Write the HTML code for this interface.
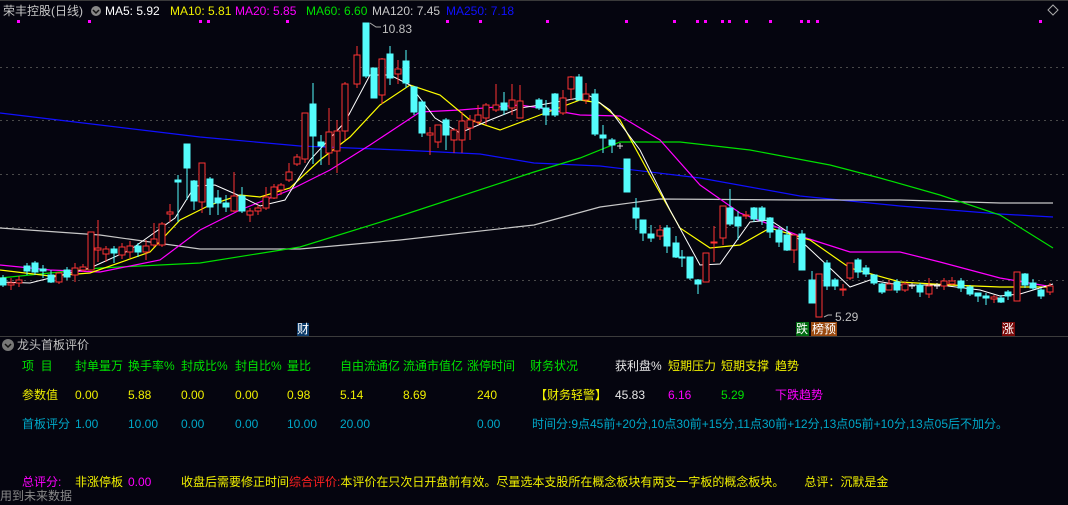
<!DOCTYPE html>
<html><head><meta charset="utf-8"><style>
html,body{margin:0;padding:0;background:#05050f;width:1068px;height:505px;overflow:hidden}
body{position:relative;font-family:"Liberation Sans","Noto Sans CJK SC",sans-serif}
.t{position:absolute;font-size:12px;white-space:nowrap;line-height:14px}
.p{position:absolute;font-size:12px;white-space:nowrap;line-height:14px}
.g{color:#00e400}.y{color:#f0f000}.w{color:#e8e8e8}.m{color:#ff00ff}.c{color:#00a8c8}.r{color:#ff2020}.gr{color:#00e000}
</style></head><body>
<svg width="1068" height="505" style="position:absolute;left:0;top:0">
<rect x="0" y="0" width="1068" height="1" fill="#3a3a3a"/>
<g stroke="#4a4a4a" stroke-dasharray="2,4" stroke-width="1">
<line x1="0" y1="67.5" x2="1068" y2="67.5"/><line x1="0" y1="120.5" x2="1068" y2="120.5"/><line x1="0" y1="174.5" x2="1068" y2="174.5"/><line x1="0" y1="227.5" x2="1068" y2="227.5"/><line x1="0" y1="280.5" x2="1068" y2="280.5"/>
</g>
<line x1="0" y1="336.5" x2="1068" y2="336.5" stroke="#3c3c3c"/>
<g fill="#ff00ff">
<rect x="17" y="20" width="3" height="3"/><rect x="88" y="20" width="3" height="3"/><rect x="199" y="20" width="3" height="3"/><rect x="207" y="20" width="3" height="3"/><rect x="286" y="20" width="3" height="3"/><rect x="446" y="20" width="3" height="3"/><rect x="479" y="20" width="3" height="3"/><rect x="546" y="20" width="3" height="3"/><rect x="625" y="20" width="3" height="3"/><rect x="673" y="20" width="3" height="3"/><rect x="696" y="20" width="3" height="3"/><rect x="704" y="20" width="3" height="3"/><rect x="721" y="20" width="3" height="3"/><rect x="728" y="20" width="3" height="3"/><rect x="745" y="20" width="3" height="3"/><rect x="769" y="20" width="3" height="3"/><rect x="800" y="20" width="3" height="3"/><rect x="807" y="20" width="3" height="3"/><rect x="816" y="20" width="3" height="3"/><rect x="1039" y="20" width="3" height="3"/>
</g>
<path d="M1053 5 l5 5 -5 5 -5 -5z" fill="none" stroke="#aaa"/>
<g fill="none" stroke-width="1.2">
<polyline stroke="#1010ff" points="0,113 100,125 200,137 300,146 400,150 480,154 534,163 600,166 700,178 800,196 900,206 1000,214 1053,217"/>
<polyline stroke="#c8c8c8" points="0,228 100,235 200,249 300,249 400,240 534,225 600,207 660,199 800,200 900,200 1000,203 1053,203"/>
<polyline stroke="#00e000" points="0,278 100,268 200,263 300,247 400,216 534,172 580,158 620,142 680,142 750,150 830,165 880,178 940,195 1000,215 1053,248"/>
<polyline stroke="#ff00ff" points="0,265 50,270 100,272 160,260 200,230 240,210 290,190 330,170 370,145 420,112 460,110 520,105 540,108 580,115 620,116 660,140 700,185 740,213 800,236 850,252 900,252 940,262 1000,278 1053,287"/>
<polyline stroke="#ffff00" points="0,270 50,276 90,273 150,252 180,220 210,205 240,195 260,197 290,188 320,160 350,137 380,105 410,85 440,95 470,120 500,130 540,115 580,100 600,103 620,120 650,175 680,228 710,248 740,245 770,228 810,240 850,268 900,282 950,285 1000,287 1053,287"/>
<polyline stroke="#ffffff" stroke-width="1" points="0,282 30,283 90,268 130,250 175,218 195,186 215,185 240,196 260,206 285,200 310,160 345,122 370,75 390,75 410,85 435,118 460,133 490,120 520,108 540,105 590,96 610,110 640,150 670,210 700,265 720,264 750,222 770,220 800,240 830,268 850,287 870,280 900,285 940,285 980,290 1000,296 1020,294 1053,284"/>
</g>
<path stroke="#54fcfc" fill="#54fcfc" stroke-width="1" d="
M3 275V287M3 278m-3 0h6V285h-6z
M27 263V275M27 266m-3 0h6V271h-6z
M35 261V275M35 263m-3 0h6V272h-6z
M43 265V278M43 269m-3 0h6V271h-6z
M51 270V283M51 275m-3 0h6V282h-6z
M67 267V280M67 270m-3 0h6V277h-6z
M114 246V263M114 249m-3 0h6V253h-6z
M138 243V257M138 246m-3 0h6V252h-6z
M178 175V222M178 180m-3 0h6V182h-6z
M187 144V200M187 144m-3 0h6V168h-6z
M194 180V210M194 181m-3 0h6V201h-6z
M210 177V215M210 179m-3 0h6V207h-6z
M218 190V215M218 198m-3 0h6V203h-6z
M226 195V212M226 203m-3 0h6V207h-6z
M242 187V213M242 196m-3 0h6V211h-6z
M313 83V164M313 104m-3 0h6V136h-6z
M321 135V165M321 142m-3 0h6V146h-6z
M366 23V78M366 23m-3 0h6V76h-6z
M374 68V98M374 68m-3 0h6V98h-6z
M390 46V85M390 54m-3 0h6V78h-6z
M406 50V88M406 61m-3 0h6V83h-6z
M414 86V115M414 87m-3 0h6V112h-6z
M422 100V137M422 102m-3 0h6V133h-6z
M446 118V150M446 120m-3 0h6V135h-6z
M504 92V115M504 103m-3 0h6V110h-6z
M539 98V110M539 100m-3 0h6V108h-6z
M546 100V125M546 108m-3 0h6V115h-6z
M555 93V117M555 94m-3 0h6V115h-6z
M579 74V100M579 77m-3 0h6V100h-6z
M595 89V136M595 94m-3 0h6V134h-6z
M603 125V153M603 135m-3 0h6V138h-6z
M612 138V153M612 140m-3 0h6V145h-6z
M627 159V192M627 159m-3 0h6V192h-6z
M636 198V230M636 208m-3 0h6V218h-6z
M643 220V241M643 220m-3 0h6V233h-6z
M651 225V242M651 234m-3 0h6V238h-6z
M667 225V253M667 228m-3 0h6V246h-6z
M676 236V258M676 243m-3 0h6V257h-6z
M682 250V267M682 257m-3 0h6V258h-6z
M690 257V280M690 257m-3 0h6V278h-6z
M698 279V294M698 280m-3 0h6V284h-6z
M730 189V226M730 208m-3 0h6V224h-6z
M738 211V240M738 217m-3 0h6V226h-6z
M754 207V222M754 208m-3 0h6V219h-6z
M762 206V225M762 208m-3 0h6V220h-6z
M770 217V238M770 218m-3 0h6V232h-6z
M779 227V247M779 230m-3 0h6V242h-6z
M787 226V251M787 235m-3 0h6V250h-6z
M802 230V270M802 234m-3 0h6V270h-6z
M812 271V303M812 280m-3 0h6V303h-6z
M827 260V290M827 263m-3 0h6V286h-6z
M835 278V290M835 280m-3 0h6V286h-6z
M858 258V278M858 260m-3 0h6V272h-6z
M866 265V277M866 268m-3 0h6V274h-6z
M874 274V285M874 275m-3 0h6V283h-6z
M882 283V294M882 284m-3 0h6V292h-6z
M897 279V293M897 282m-3 0h6V290h-6z
M920 283V297M920 285m-3 0h6V292h-6z
M961 278V292M961 281m-3 0h6V288h-6z
M970 285V296M970 287m-3 0h6V294h-6z
M978 293V302M978 293m-3 0h6V296h-6z
M986 293V305M986 296m-3 0h6V298h-6z
M1001 295V303M1001 298m-3 0h6V302h-6z
M1008 290V300M1008 292m-3 0h6V296h-6z
M1025 273V288M1025 274m-3 0h6V285h-6z
M1033 279V290M1033 283m-3 0h6V288h-6z
M1041 288V299M1041 290m-3 0h6V296h-6z"/>
<path stroke="#ff3333" fill="none" d="
M11 278V290M19 276V287M59 272V284M75 263V282M83 264V272M91 232V270M98 220V262M106 246V262M122 243V259M130 241V258M146 240V260M154 223V247M162 222V247M170 204V222M202 163V213M234 172V212M250 208V222M258 205V215M266 187V210M274 184V199M281 183V195M289 163V182M297 154V166M305 113V163M329 108V165M337 120V173M345 82V140M357 46V88M382 58V104M398 60V84M430 127V155M438 125V148M454 128V153M462 112V153M470 115V140M478 105V125M486 103V125M496 84V112M512 84V115M520 85V118M563 90V115M571 76V100M586 83V104M660 225V240M706 253V282M714 226V262M723 206V245M746 211V219M794 235V263M819 274V317M843 284V296M850 263V280M889 280V290M905 282V292M929 278V298M944 278V290M952 277V285M994 295V303M1017 272V301M1050 283V295"/>
<path stroke="#ff3333" fill="#05050f" d="
M11 283m-3 0h6V285h-6zM19 280m-3 0h6V283h-6zM59 273m-3 0h6V282h-6zM75 268m-3 0h6V275h-6zM83 267m-3 0h6V270h-6zM91 232m-3 0h6V270h-6zM98 248m-3 0h6V250h-6zM106 249m-3 0h6V254h-6zM122 247m-3 0h6V255h-6zM130 246m-3 0h6V252h-6zM146 246m-3 0h6V252h-6zM154 239m-3 0h6V245h-6zM162 224m-3 0h6V245h-6zM170 212m-3 0h6V214h-6zM202 163m-3 0h6V202h-6zM234 196m-3 0h6V211h-6zM250 211m-3 0h6V215h-6zM258 208m-3 0h6V211h-6zM266 197m-3 0h6V208h-6zM274 187m-3 0h6V198h-6zM281 185m-3 0h6V190h-6zM289 172m-3 0h6V180h-6zM297 157m-3 0h6V164h-6zM305 113m-3 0h6V159h-6zM329 132m-3 0h6V153h-6zM337 131m-3 0h6V151h-6zM345 84m-3 0h6V131h-6zM357 55m-3 0h6V84h-6zM382 59m-3 0h6V95h-6zM398 69m-3 0h6V74h-6zM430 133m-3 0h6V135h-6zM438 125m-3 0h6V142h-6zM454 130m-3 0h6V140h-6zM462 121m-3 0h6V140h-6zM470 120m-3 0h6V128h-6zM478 115m-3 0h6V122h-6zM486 105m-3 0h6V118h-6zM496 105m-3 0h6V110h-6zM512 100m-3 0h6V108h-6zM520 101m-3 0h6V118h-6zM563 98m-3 0h6V113h-6zM571 77m-3 0h6V89h-6zM586 94m-3 0h6V100h-6zM660 230m-3 0h6V236h-6zM706 253m-3 0h6V282h-6zM714 242m-3 0h6V243h-6zM723 206m-3 0h6V238h-6zM746 215m-3 0h6V216h-6zM794 235m-3 0h6V250h-6zM819 274m-3 0h6V317h-6zM843 289m-3 0h6V290h-6zM850 263m-3 0h6V278h-6zM889 284m-3 0h6V290h-6zM905 284m-3 0h6V290h-6zM929 286m-3 0h6V294h-6zM944 281m-3 0h6V286h-6zM952 281m-3 0h6V284h-6zM994 297m-3 0h6V299h-6zM1017 272m-3 0h6V301h-6zM1050 286m-3 0h6V292h-6z"/>
<g stroke="#ddd"><path d="M620 143V149M617 146H623M912 283V289M909 286H915M937 283V289M934 286H940"/></g>
<path d="M370 23l6 4h5M824 317l4 -2h4" stroke="#aaa" fill="none"/>
<text x="382" y="33" fill="#c0c0c0" font-size="12" font-family="Liberation Sans">10.83</text>
<text x="835" y="321" fill="#c0c0c0" font-size="12" font-family="Liberation Sans">5.29</text>
<rect x="297" y="323" width="12" height="13" fill="#0a3a6a"/>
<rect x="796" y="322" width="13" height="14" fill="#006a10"/>
<rect x="811" y="322" width="26" height="14" fill="#9a4a10"/>
<rect x="1002" y="322" width="13" height="14" fill="#7a0a0a"/>
<circle cx="96" cy="11" r="5" fill="#888"/><path d="M93 10l3 3 3-3" stroke="#111" fill="none" stroke-width="1.5"/>
<circle cx="8" cy="345" r="6" fill="#777"/><path d="M5 344l3 3 3-3" stroke="#111" fill="none" stroke-width="1.5"/>
</svg>
<div class="t" style="left:297px;top:322px;color:#fff">财</div>
<div class="t" style="left:796px;top:322px;color:#fff">跌</div>
<div class="t" style="left:812px;top:322px;color:#fff">榜预</div>
<div class="t" style="left:1002px;top:322px;color:#fff">涨</div>
<div class="t" style="left:3px;top:4px;color:#c8c8c8">荣丰控股(日线)</div>
<div class="t" style="left:105px;top:4px;color:#fff">MA5: 5.92</div>
<div class="t" style="left:170px;top:4px;color:#f0f000">MA10: 5.81</div>
<div class="t" style="left:235px;top:4px;color:#ff00ff">MA20: 5.85</div>
<div class="t" style="left:306px;top:4px;color:#00e000">MA60: 6.60</div>
<div class="t" style="left:372px;top:4px;color:#c8c8c8">MA120: 7.45</div>
<div class="t" style="left:446px;top:4px;color:#1010ff">MA250: 7.18</div>
<div class="t" style="left:17px;top:338px;color:#c0c0c0">龙头首板评价</div>

<div class="p g" style="left:22px;top:359px">项&nbsp; 目</div>
<div class="p g" style="left:75px;top:359px">封单量万</div>
<div class="p g" style="left:128px;top:359px">换手率%</div>
<div class="p g" style="left:181px;top:359px">封成比%</div>
<div class="p g" style="left:235px;top:359px">封自比%</div>
<div class="p g" style="left:287px;top:359px">量比</div>
<div class="p g" style="left:340px;top:359px">自由流通亿</div>
<div class="p g" style="left:403px;top:359px">流通市值亿</div>
<div class="p g" style="left:467px;top:359px">涨停时间</div>
<div class="p g" style="left:530px;top:359px">财务状况</div>
<div class="p w" style="left:615px;top:359px">获利盘%</div>
<div class="p y" style="left:668px;top:359px">短期压力</div>
<div class="p y" style="left:721px;top:359px">短期支撑</div>
<div class="p y" style="left:775px;top:359px">趋势</div>

<div class="p y" style="left:22px;top:388px">参数值</div>
<div class="p y" style="left:75px;top:388px">0.00</div>
<div class="p y" style="left:128px;top:388px">5.88</div>
<div class="p y" style="left:181px;top:388px">0.00</div>
<div class="p y" style="left:235px;top:388px">0.00</div>
<div class="p y" style="left:287px;top:388px">0.98</div>
<div class="p y" style="left:340px;top:388px">5.14</div>
<div class="p y" style="left:403px;top:388px">8.69</div>
<div class="p y" style="left:477px;top:388px">240</div>
<div class="p y" style="left:535px;top:388px">【财务轻警】</div>
<div class="p w" style="left:615px;top:388px">45.83</div>
<div class="p m" style="left:668px;top:388px">6.16</div>
<div class="p gr" style="left:721px;top:388px">5.29</div>
<div class="p m" style="left:775px;top:388px">下跌趋势</div>

<div class="p c" style="left:22px;top:417px">首板评分</div>
<div class="p c" style="left:75px;top:417px">1.00</div>
<div class="p c" style="left:128px;top:417px">10.00</div>
<div class="p c" style="left:181px;top:417px">0.00</div>
<div class="p c" style="left:235px;top:417px">0.00</div>
<div class="p c" style="left:287px;top:417px">10.00</div>
<div class="p c" style="left:340px;top:417px">20.00</div>
<div class="p c" style="left:477px;top:417px">0.00</div>
<div class="p c" style="left:532px;top:417px">时间分:9点45前+20分,10点30前+15分,11点30前+12分,13点05前+10分,13点05后不加分。</div>

<div class="p m" style="left:22px;top:475px">总评分:</div>
<div class="p y" style="left:75px;top:475px">非涨停板</div>
<div class="p m" style="left:128px;top:475px">0.00</div>
<div class="p y" style="left:181px;top:475px">收盘后需要修正时间<span class="r">综合评价:</span>本评价在只次日开盘前有效。尽量选本支股所在概念板块有两支一字板的概念板块。&nbsp;&nbsp;&nbsp;&nbsp;&nbsp; 总评：沉默是金</div>
<div class="p" style="left:0px;top:489px;color:#888">用到未来数据</div>
</body></html>
